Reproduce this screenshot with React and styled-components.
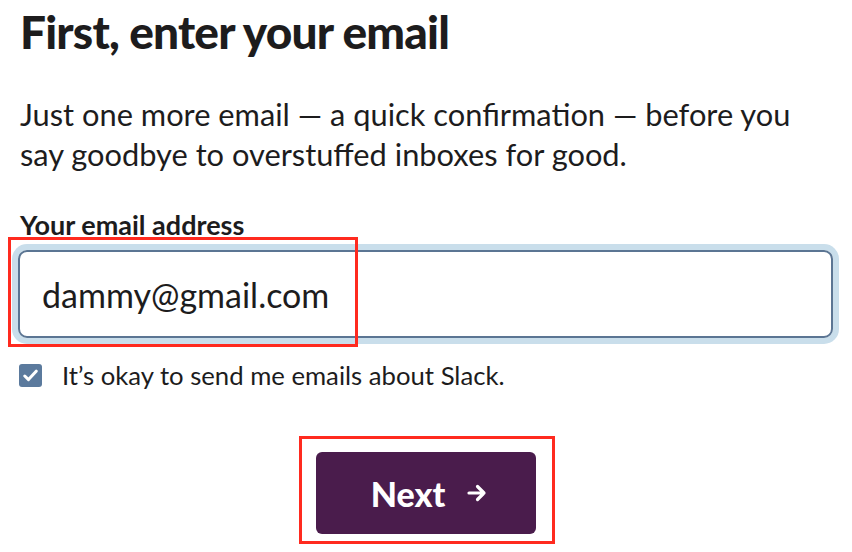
import React from "react";
import styled, { createGlobalStyle } from "styled-components";

const Global = createGlobalStyle`
  html, body { margin: 0; padding: 0; background: #fff; }
  body { font-family: Lato, "Noto Sans", sans-serif; color: #1d1c1d; }
  * { box-sizing: border-box; }
`;

const Page = styled.div`
  position: relative;
  width: 852px;
  height: 552px;
  overflow: hidden;
  padding: 0 19px 0 18px;
  display: flex;
  flex-direction: column;
`;

const Title = styled.h1`
  margin: 2px 0 0 2px;
  font-family: Lato, sans-serif;
  font-weight: 900;
  font-size: 46px;
  line-height: 60px;
  letter-spacing: -0.8px;
  color: #1d1c1d;
`;

const Lead = styled.p`
  margin: 33px 0 0 2px;
  font-size: 30.8px;
  line-height: 40px;
  font-weight: 400;
  color: #1d1c1d;
`;

const Label = styled.label`
  display: block;
  margin: 35px 0 0 2px;
  font-size: 27px;
  line-height: 30px;
  font-weight: 700;
  color: #1d1c1d;
`;

const Input = styled.div`
  margin-top: 10px;
  height: 88px;
  border: 2px solid #5b7593;
  border-radius: 9px;
  box-shadow: 0 0 0 6px #c9deeb;
  display: flex;
  align-items: center;
  padding-left: 22px;
  font-size: 34px;
  color: #1d1c1d;
`;

const CheckRow = styled.div`
  margin-top: 24px;
  display: flex;
  align-items: center;
  gap: 20px;
  padding-left: 1px;
  font-size: 25.7px;
  line-height: 26px;
  color: #1d1c1d;
`;

const Box = styled.span`
  width: 23px;
  height: 23px;
  border-radius: 3px;
  background: #5b7a9d;
  display: flex;
  align-items: center;
  justify-content: center;
  flex: none;
`;

const ButtonWrap = styled.div`
  margin-top: 64px;
  display: flex;
  justify-content: center;
  padding-left: 1px;
`;

const Button = styled.button`
  width: 220px;
  height: 82px;
  border: none;
  border-radius: 6px;
  background: #4a1c4c;
  color: #fff;
  font-family: Lato, sans-serif;
  font-weight: 900;
  font-size: 34px;
  display: flex;
  align-items: center;
  justify-content: center;
  gap: 22px;
  padding: 0 0 0 6px;
`;

const Arrow = styled.svg`
  flex: none;
  width: 20px;
  height: 20px;
  display: block;
`;

const Mark = styled.div`
  position: absolute;
  left: ${(p) => p.$x}px;
  top: ${(p) => p.$y}px;
  width: ${(p) => p.$w}px;
  height: ${(p) => p.$h}px;
  border: 3px solid #ff2a1f;
  pointer-events: none;
`;

export default function App() {
  return (
    <>
      <Global />
      <Page>
        <Title>First, enter your email</Title>
        <Lead>
          Just one more email — a quick confirmation — before you
          <br />
          say goodbye to overstuffed inboxes for good.
        </Lead>
        <Label>Your email address</Label>
        <Input>dammy@gmail.com</Input>
        <CheckRow>
          <Box>
            <svg width="15" height="13" viewBox="0 0 15 13">
              <path d="M1.8 7 L5.5 10.6 L13.2 2.2" fill="none" stroke="#fff" strokeWidth="3" strokeLinecap="round" strokeLinejoin="round" />
            </svg>
          </Box>
          It’s okay to send me emails about Slack.
        </CheckRow>
        <ButtonWrap>
          <Button>
            Next
            <Arrow viewBox="0 0 20 20">
              <path d="M2 10 H17 M10.5 3.5 L17 10 L10.5 16.5" fill="none" stroke="#fff" strokeWidth="3.2" strokeLinecap="round" strokeLinejoin="round" />
            </Arrow>
          </Button>
        </ButtonWrap>
        <Mark $x={8} $y={237} $w={350} $h={110} />
        <Mark $x={299} $y={436} $w={256} $h={108} />
      </Page>
    </>
  );
}
